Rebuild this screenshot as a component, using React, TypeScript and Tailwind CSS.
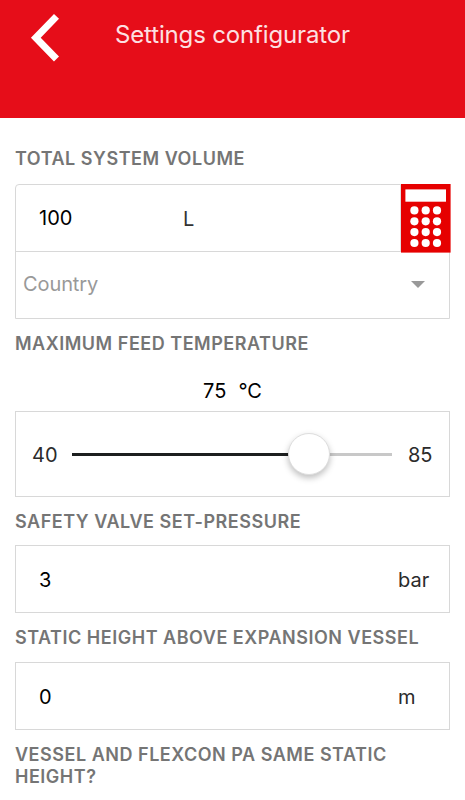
import React, { useState } from 'react';

const BackIcon: React.FC = () => (
  <svg className="block h-[50px] w-[30px]" viewBox="0 0 30 50" fill="none">
    <path d="M26.5 4.4 L5.8 25.7 L26.5 47" stroke="white" strokeWidth="7" />
  </svg>
);

const CalculatorIcon: React.FC = () => (
  <svg className="block h-[69px] w-[50px]" viewBox="0 0 50 69">
    <rect width="49.6" height="68.6" fill="#e60000" />
    <rect x="4.4" y="5.4" width="40.6" height="12.3" fill="white" />
    {[26.4, 37.3, 48.1, 59].map((cy) =>
      [13.4, 24.7, 36].map((cx) => <circle key={`${cx}-${cy}`} cx={cx} cy={cy} r="4.1" fill="white" />)
    )}
  </svg>
);

interface FieldProps {
  value: string;
  unit: string;
}

const Field: React.FC<FieldProps> = ({ value, unit }) => (
  <div className="flex h-[68px] items-center border border-[#d8d8d8] pl-[23px] text-xl">
    <span className="flex-1 pt-px text-black">{value}</span>
    <span className="w-[51px] pt-px text-[#2b2b2b]">{unit}</span>
  </div>
);

const MIN_TEMP = 40;
const MAX_TEMP = 85;

export default function App() {
  const [temperature] = useState(75);
  const progress = ((temperature - MIN_TEMP) / (MAX_TEMP - MIN_TEMP)) * 100;
  const headingStyle = 'text-lg leading-[22px] font-semibold tracking-[0.52px] text-[#757575] whitespace-nowrap';

  return (
    <div className="h-[800px] w-[465px] overflow-hidden bg-white font-['Inter',sans-serif]">
      <header className="flex h-[118px] items-start bg-[#e60d19] pt-3 pl-[30px]">
        <button className="shrink-0">
          <BackIcon />
        </button>
        <h1 className="ml-[55px] pt-px text-2xl leading-[44px] tracking-[-0.15px] text-[#fde0e2]">
          Settings configurator
        </h1>
      </header>

      <main className="px-[15px] pt-[30px]">
        <h2 className={headingStyle}>TOTAL SYSTEM VOLUME</h2>
        <div className="mt-[14px] h-[135px] rounded-tl-sm border border-[#d8d8d8]">
          <div className="flex h-[67px] items-center border-b border-[#d8d8d8] pl-[23px] text-xl">
            <span className="w-[144px] text-black">100</span>
            <span className="flex-1 pt-px text-[#333]">L</span>
            <button className="-mt-px -mr-0.5 h-[67px] border-l border-[#e0e0e0]">
              <CalculatorIcon />
            </button>
          </div>
          <div className="flex h-[64px] items-center justify-between pr-6 pl-[7px] text-xl tracking-[-0.1px] text-[#999]">
            <span>Country</span>
            <svg className="h-[7px] w-[14px]" viewBox="0 0 14 7">
              <path d="M0 0h14L7 7z" fill="#999" />
            </svg>
          </div>
        </div>

        <h2 className={`mt-[14px] ${headingStyle}`}>MAXIMUM FEED TEMPERATURE</h2>
        <div className="mt-[21px] flex h-[30px] justify-center gap-3 text-xl leading-[30px] text-black">
          <span>{temperature}</span>
          <span>°C</span>
        </div>
        <div className="mt-[5px] flex h-[86px] items-center border border-[#d8d8d8] text-xl text-[#2b2b2b]">
          <span className="w-[56px] pt-px pl-4">{MIN_TEMP}</span>
          <div className="relative h-[3px] w-[320px] bg-[#c8c8c8]">
            <div className="h-full bg-[#1c1f1f]" style={{ width: `${progress}%` }} />
            <div
              className="absolute top-1/2 size-[42px] -translate-y-1/2 rounded-full border border-[#dedede] bg-white shadow-[0_3px_6px_rgba(0,0,0,0.25)]"
              style={{ left: `calc(${progress}% - ${(progress / 100) * 42}px)` }}
            />
          </div>
          <span className="pt-px pl-4">{MAX_TEMP}</span>
        </div>

        <h2 className={`mt-[14px] ${headingStyle}`}>SAFETY VALVE SET-PRESSURE</h2>
        <div className="mt-[12px]">
          <Field value="3" unit="bar" />
        </div>

        <h2 className={`mt-[14px] ${headingStyle}`}>STATIC HEIGHT ABOVE EXPANSION VESSEL</h2>
        <div className="mt-[13px]">
          <Field value="0" unit="m" />
        </div>

        <h2 className={`mt-[14px] ${headingStyle}`}>
          VESSEL AND FLEXCON PA SAME STATIC
          <br />
          HEIGHT?
        </h2>
      </main>
    </div>
  );
}
